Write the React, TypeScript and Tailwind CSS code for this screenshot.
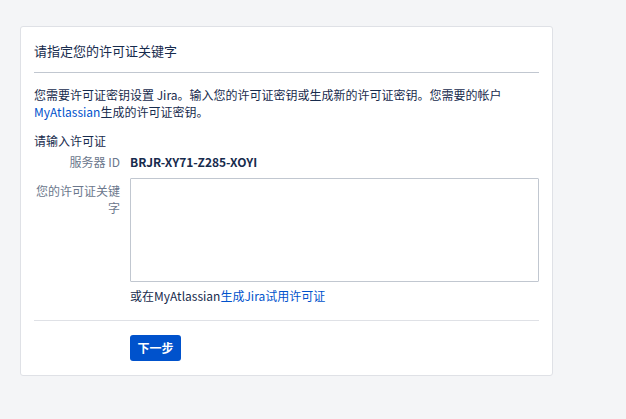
import React, { useState } from 'react';

const FONT = '"Noto Sans CJK SC", "Noto Sans", sans-serif';

export default function App() {
  const [licenseKey, setLicenseKey] = useState('');

  return (
    <div
      className="min-h-screen w-full bg-[#f4f5f7] pt-[26px] pl-[20px] text-[#172b4d]"
      style={{ fontFamily: FONT }}
    >
      <div className="w-[533px] bg-white border border-[#dfe1e6] rounded-[3px] px-[13px] pt-[14px] pb-[14px]">
        {/* Header */}
        <div className="border-b border-[#c1c7d0] pb-[11px]">
          <h2 className="text-[13px] leading-[20px] font-normal">请指定您的许可证关键字</h2>
        </div>

        <p className="mt-[13px] text-[12px] leading-[17px]">
          您需要许可证密钥设置 Jira。输入您的许可证密钥或生成新的许可证密钥。您需要的帐户
          <br />
          <a href="#" className="text-[#0052cc]">MyAtlassian</a>生成的许可证密钥。
        </p>

        <h3 className="mt-[12px] text-[12px] leading-[17px] font-normal">请输入许可证</h3>

        {/* Server ID */}
        <div className="mt-[4px] flex text-[12px] leading-[17px]">
          <div className="w-[86px] shrink-0 text-right text-[#6b778c]">服务器 ID</div>
          <div className="ml-[10px] font-bold">BRJR-XY71-Z285-XOYI</div>
        </div>

        {/* License key */}
        <div className="mt-[8px] flex text-[12px] leading-[17px]">
          <label className="w-[86px] shrink-0 pt-[4px] text-right text-[#6b778c]">
            您的许可证关键字
          </label>
          <div className="ml-[10px] flex-1">
            <textarea
              value={licenseKey}
              onChange={e => setLicenseKey(e.target.value)}
              className="block w-full h-[104px] border border-[#c1c7d0] rounded-[1px] resize-none outline-none p-1"
            />
            <div className="mt-[5px]">
              或在MyAtlassian<a href="#" className="text-[#0052cc]">生成Jira试用许可证</a>
            </div>
          </div>
        </div>

        {/* Footer */}
        <div className="mt-[16px] border-t border-[#dfe1e6] pt-[13px] pl-[96px]">
          <button className="w-[51px] h-[26px] bg-[#0052cc] rounded-[3px] text-white text-[12px] font-bold leading-[26px]">
            下一步
          </button>
        </div>
      </div>
    </div>
  );
}
